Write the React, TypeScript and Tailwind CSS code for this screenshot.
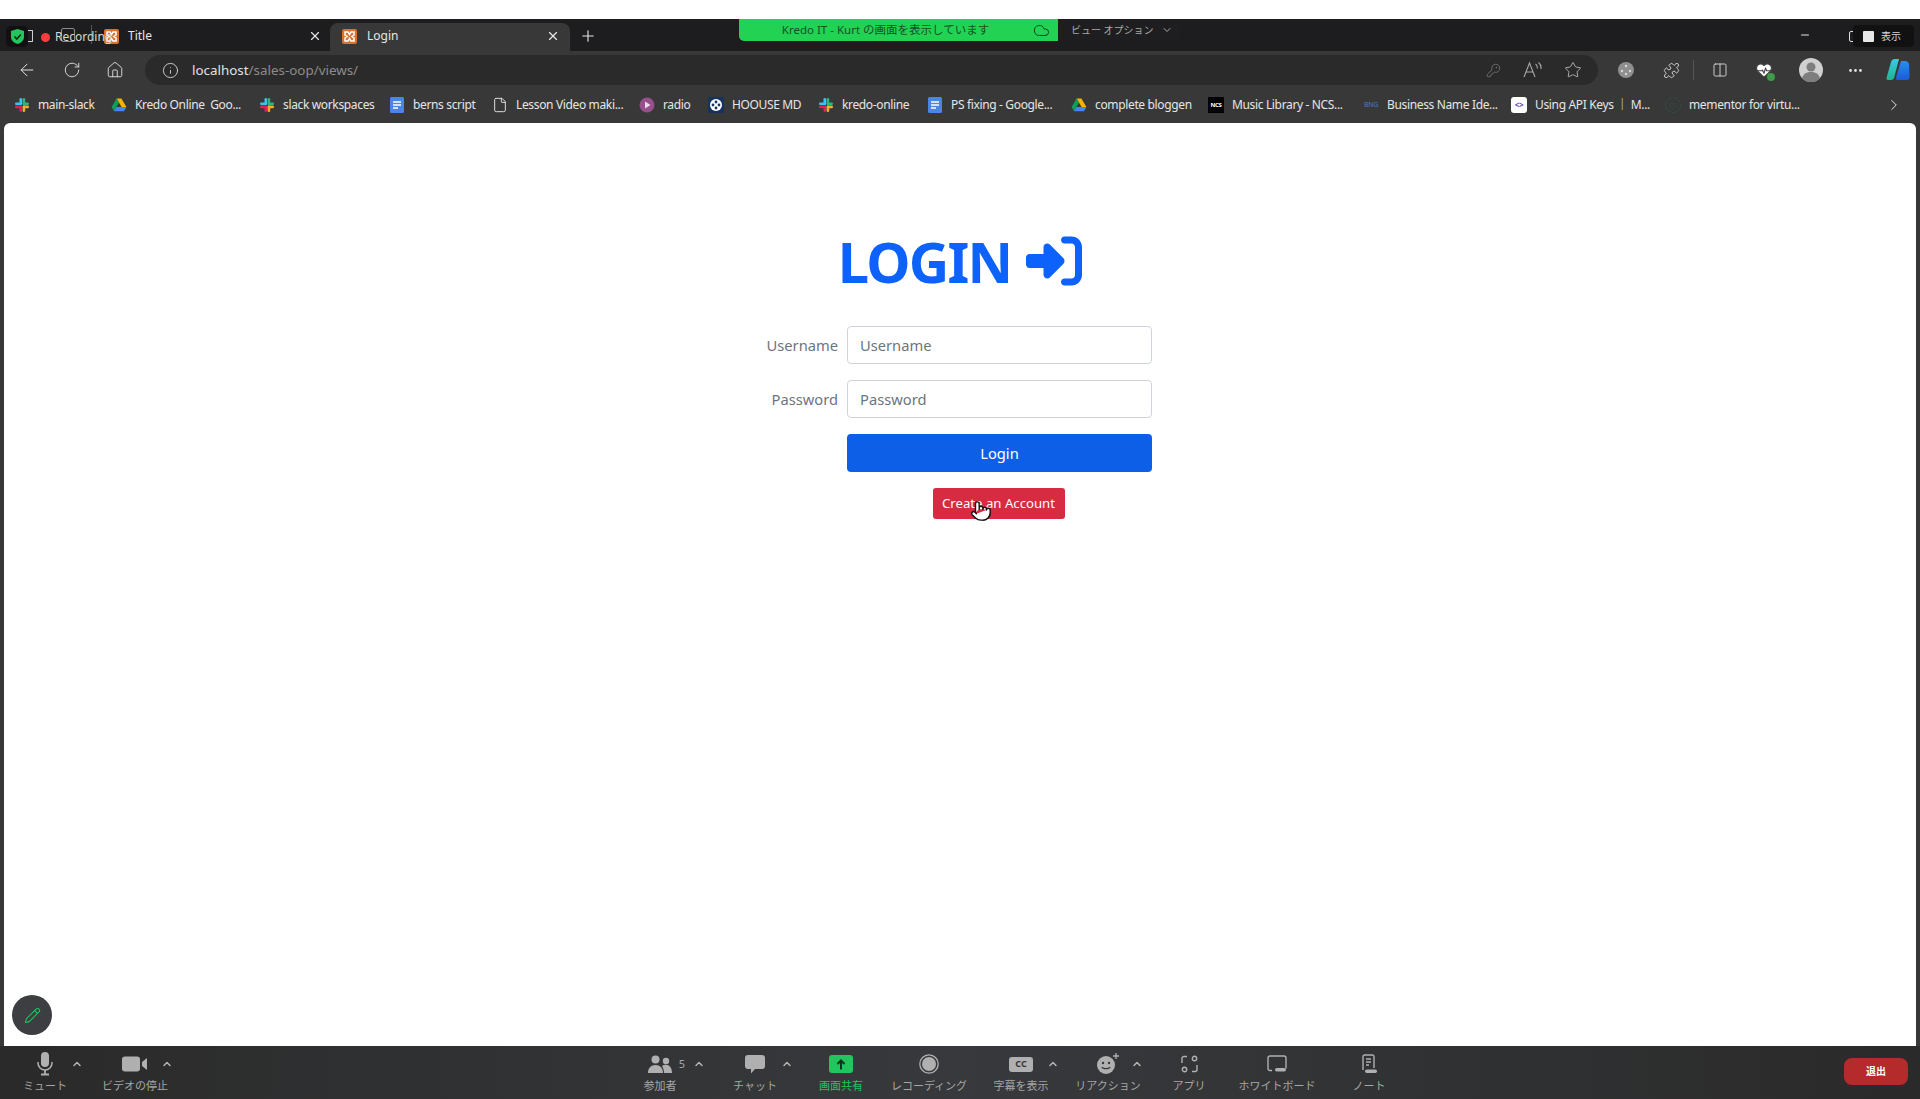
import React from "react";
import { FaRightToBracket } from "react-icons/fa6";
import {
  ArrowLeft,
  RotateCw,
  Home,
  Info,
  X,
  Plus,
  KeyRound,
  Star,
  Puzzle,
  Columns2,
  HeartPulse,
  MoreHorizontal,
  ChevronRight,
  ChevronDown,
  ChevronUp,
  Cloud,
  Minus,
  Pencil,
  File,
  Pointer,
} from "lucide-react";

const sans = "font-['Noto_Sans','Noto_Sans_CJK_JP',sans-serif]";

function SlackIcon() {
  return (
    <svg width="16" height="16" viewBox="0 0 16 16">
      <rect x="5.5" y="1" width="2.6" height="7" rx="1.3" fill="#36c5f0" />
      <rect x="1" y="5.5" width="7" height="2.6" rx="1.3" fill="#36c5f0" />
      <rect x="8.6" y="1" width="2.6" height="7" rx="1.3" fill="#2eb67d" />
      <rect x="8.6" y="5.5" width="6.4" height="2.6" rx="1.3" fill="#2eb67d" />
      <rect x="8.6" y="8.6" width="6.4" height="2.6" rx="1.3" fill="#ecb22e" />
      <rect x="8.6" y="8.6" width="2.6" height="6.4" rx="1.3" fill="#ecb22e" />
      <rect x="1" y="8.6" width="7" height="2.6" rx="1.3" fill="#e01e5a" />
      <rect x="5.5" y="8.6" width="2.6" height="6.4" rx="1.3" fill="#e01e5a" />
    </svg>
  );
}

function DriveIcon() {
  return (
    <svg width="16" height="16" viewBox="0 0 16 16">
      <path d="M5.6 1.5h4.8l5 8.5h-4.8z" fill="#f4b400" />
      <path d="M5.6 1.5 .6 10l2.4 4.2 5-8.6z" fill="#0f9d58" />
      <path d="M3 14.2h10l2.4-4.2H5.4z" fill="#4285f4" />
    </svg>
  );
}

function DocIcon() {
  return (
    <svg width="16" height="16" viewBox="0 0 16 16">
      <rect x="1" y="0" width="14" height="16" rx="1.5" fill="#4a86e8" />
      <path d="M4 5h8M4 8h8M4 11h5" stroke="#fff" strokeWidth="1.6" />
    </svg>
  );
}

function XamppIcon() {
  return (
    <svg width="15" height="15" viewBox="0 0 15 15">
      <rect width="15" height="15" rx="2" fill="#d9722c" />
      <path d="M3 3h3l1.500 2.500L9 3h3v3L9.800 7.500 12 9v3H9L7.500 9.500 6 12H3V9l2.200-1.500L3 6z" fill="none" stroke="#fff" strokeWidth="1.500" />
    </svg>
  );
}

function RadioIcon() {
  return (
    <svg width="16" height="16" viewBox="0 0 16 16">
      <circle cx="8" cy="8" r="7.500" fill="#96508c" />
      <path d="M6 4.500v7l5.500-3.500z" fill="#f0d8ee" />
    </svg>
  );
}

function ReelIcon() {
  return (
    <svg width="16" height="16" viewBox="0 0 16 16">
      <rect width="16" height="16" rx="1" fill="#16335e" />
      <circle cx="8" cy="8" r="6" fill="#fff" />
      <circle cx="8" cy="5" r="1.400" fill="#16335e" />
      <circle cx="8" cy="11" r="1.400" fill="#16335e" />
      <circle cx="5" cy="8" r="1.400" fill="#16335e" />
      <circle cx="11" cy="8" r="1.400" fill="#16335e" />
    </svg>
  );
}

const bookmarks: { label: string; width: string; icon: React.ReactNode }[] = [
  { label: "main-slack", width: "w-[97px]", icon: <SlackIcon /> },
  { label: "Kredo Online  Goo...", width: "w-[148px]", icon: <DriveIcon /> },
  { label: "slack workspaces", width: "w-[130px]", icon: <SlackIcon /> },
  { label: "berns script", width: "w-[103px]", icon: <DocIcon /> },
  { label: "Lesson Video maki...", width: "w-[147px]", icon: <File size={16} color="#e8e8e8" strokeWidth={1.4} /> },
  { label: "radio", width: "w-[69px]", icon: <RadioIcon /> },
  { label: "HOOUSE MD", width: "w-[110px]", icon: <ReelIcon /> },
  { label: "kredo-online", width: "w-[109px]", icon: <SlackIcon /> },
  { label: "PS fixing - Google...", width: "w-[144px]", icon: <DocIcon /> },
  { label: "complete bloggen", width: "w-[137px]", icon: <DriveIcon /> },
  {
    label: "Music Library - NCS...",
    width: "w-[155px]",
    icon: <span className="flex h-4 w-4 items-center justify-center bg-black text-[6px] font-bold text-white">NCS</span>,
  },
  {
    label: "Business Name Ide...",
    width: "w-[148px]",
    icon: <span className="flex h-4 w-4 items-center justify-center text-[7px] text-[#4a78c8]">BNG</span>,
  },
  {
    label: "Using API Keys ｜ M...",
    width: "w-[154px]",
    icon: (
      <span className="flex h-4 w-4 items-center justify-center rounded-[3px] bg-white text-[8px] font-bold text-[#5a3fc0]">
        &lt;&gt;
      </span>
    ),
  },
  {
    label: "mementor for virtu...",
    width: "w-[135px]",
    icon: <span className="flex h-4 w-4 items-center justify-center rounded-full border border-[#2f4a44] text-[8px] text-[#2f4a44]">m</span>,
  },
];

function Caret({ className }: { className: string }) {
  return (
    <div className={`flex h-[26px] w-2 shrink-0 items-center justify-center ${className}`}>
      <ChevronUp size={12} color="#b4b4b4" strokeWidth={3} className="shrink-0" />
    </div>
  );
}

function Tool({
  label,
  width,
  className = "",
  green = false,
  children,
}: {
  label: string;
  width: string;
  className?: string;
  green?: boolean;
  children: React.ReactNode;
}) {
  return (
    <div className={`flex shrink-0 flex-col items-center ${width} ${className}`}>
      <div className="flex h-[26px] items-center justify-center">{children}</div>
      <span className={`mt-[2px] whitespace-nowrap text-[11px] leading-[14px] ${green ? "text-[#22c55e]" : "text-[#a6a6a6]"}`}>
        {label}
      </span>
    </div>
  );
}

function ZoomToolbar() {
  return (
    <div className={`flex h-[53px] shrink-0 items-start bg-gradient-to-r from-[#2a2a2a] via-[#37393c] to-[#2a2a2a] pt-[5px] ${sans}`}>
      <Tool label="ミュート" width="w-[56px]" className="ml-[17px]">
        <svg width="18" height="24" viewBox="0 0 18 24" fill="#b0b0b0">
          <rect x="5" y="0" width="8" height="15" rx="4" />
          <path d="M2 10v1a7 7 0 0 0 14 0v-1" fill="none" stroke="#b0b0b0" strokeWidth="1.500" />
          <path d="M9 18v4M5 22.500h8" stroke="#b0b0b0" strokeWidth="1.800" />
        </svg>
      </Tool>
      <Caret className="" />
      <Tool label="ビデオの停止" width="w-[56px]" className="ml-[26px]">
        <svg width="26" height="16" viewBox="0 0 26 16" fill="#b0b0b0">
          <rect width="18" height="15" y="0.500" rx="3" />
          <path d="M20 6l5-4v12l-5-4z" />
        </svg>
      </Tool>
      <Caret className="" />

      <Tool label="参加者" width="w-[36px]" className="ml-[471px]">
        <svg width="24" height="19" viewBox="0 0 24 19" fill="#b0b0b0">
          <circle cx="7.500" cy="4.500" r="4" />
          <circle cx="18" cy="6" r="3.200" />
          <path d="M0 18c0-5 3-8 7.500-8s7.500 3 7.500 8zM16 18c0-3-.8-5-2-7 1-.7 2.500-1.200 4-1.200 3.500 0 6 3 6 8.200z" />
        </svg>
      </Tool>
      <span className="flex h-[26px] w-2 shrink-0 items-center justify-center text-[11px] text-[#a6a6a6]">5</span>
      <Caret className="ml-[9px]" />
      <Tool label="チャット" width="w-[40px]" className="ml-[32px]">
        <svg width="20" height="19" viewBox="0 0 20 19" fill="#b0b0b0">
          <path d="M3 0h14a3 3 0 0 1 3 3v8a3 3 0 0 1-3 3h-7l-4 4.500V14H3a3 3 0 0 1-3-3V3a3 3 0 0 1 3-3z" />
        </svg>
      </Tool>
      <Caret className="ml-[8px]" />
      <Tool label="画面共有" width="w-[40px]" className="ml-[30px]" green>
        <span className="flex h-[18px] w-6 items-center justify-center rounded-[3px] bg-[#22c55e] text-[#12351f]">
          <svg width="10" height="11" viewBox="0 0 10 11" fill="none" stroke="#12351f" strokeWidth="2">
            <path d="M5 10.500V2M1.500 5 5 1.500 8.500 5" />
          </svg>
        </span>
      </Tool>
      <Tool label="レコーディング" width="w-[40px]" className="ml-[48px]">
        <svg width="20" height="20" viewBox="0 0 20 20">
          <circle cx="10" cy="10" r="9.200" fill="none" stroke="#b0b0b0" strokeWidth="1.300" />
          <circle cx="10" cy="10" r="7" fill="#b0b0b0" />
        </svg>
      </Tool>
      <Tool label="字幕を表示" width="w-[40px]" className="ml-[52px]">
        <span className="flex h-[15px] w-6 items-center justify-center rounded-[3px] bg-[#b0b0b0] text-[9px] font-bold text-[#37393c]">
          CC
        </span>
      </Tool>
      <Caret className="ml-[8px]" />
      <Tool label="リアクション" width="w-[40px]" className="ml-[31px]">
        <svg width="24" height="22" viewBox="0 0 24 22">
          <circle cx="10" cy="12" r="9" fill="#b0b0b0" />
          <circle cx="7" cy="10" r="1.200" fill="#37393c" />
          <circle cx="13" cy="10" r="1.200" fill="#37393c" />
          <path d="M6 14c1 2.200 7 2.200 8 0" stroke="#37393c" strokeWidth="1.300" fill="none" />
          <path d="M20 0v6M17 3h6" stroke="#b0b0b0" strokeWidth="1.300" />
        </svg>
      </Tool>
      <Caret className="ml-[5px]" />
      <Tool label="アプリ" width="w-[40px]" className="ml-[28px]">
        <svg width="17" height="18" viewBox="0 0 17 18" fill="none" stroke="#b0b0b0" strokeWidth="1.400">
          <path d="M6 1.500H3A2 2 0 0 0 1 3.500V8M11 16.500h3a2 2 0 0 0 2-2V10" />
          <circle cx="13.500" cy="3.500" r="2.200" />
          <circle cx="3.500" cy="14.500" r="2.200" />
        </svg>
      </Tool>
      <Tool label="ホワイトボード" width="w-[40px]" className="ml-[48px]">
        <svg width="20" height="18" viewBox="0 0 20 18" fill="none" stroke="#b0b0b0" strokeWidth="1.400">
          <path d="M5 15.500H3a2 2 0 0 1-2-2V3a2 2 0 0 1 2-2h14a2 2 0 0 1 2 2v10.500" />
          <rect x="8" y="13" width="11" height="3.500" rx="1.700" fill="#b0b0b0" stroke="none" />
        </svg>
      </Tool>
      <Tool label="ノート" width="w-[40px]" className="ml-[52px]">
        <svg width="18" height="20" viewBox="0 0 18 20" fill="none" stroke="#b0b0b0" strokeWidth="1.400">
          <path d="M3 16V2.500A1.500 1.500 0 0 1 4.500 1h8A1.500 1.500 0 0 1 14 2.500V14M6 5h5M6 8h5M6 11h3" />
          <rect x="5" y="15.500" width="12" height="3.500" rx="1.700" fill="#b0b0b0" stroke="none" />
        </svg>
      </Tool>

      <button className="mt-[7px] ml-auto mr-[12px] flex h-[27px] w-16 items-center justify-center rounded-[8px] bg-[#b52a2a] text-[10px] font-bold text-white">
        退出
      </button>
    </div>
  );
}

function LoginForm() {
  return (
    <div className="flex flex-col items-center pt-[106px] font-['Noto_Sans',sans-serif]">
      <h1 className="mb-[33px] flex h-16 items-center text-[56px] font-bold leading-none tracking-[-1.8px] text-[#0d62fb]">
        LOGIN
        <FaRightToBracket size={56} className="ml-[15px]" />
      </h1>
      <form className="grid w-[400px] grid-cols-[78px_1fr] items-center gap-x-[9px] gap-y-4 pr-2 text-[14.7px] text-[#6c757d]">
        <label className="pt-[1px] text-right">Username</label>
        <input
          placeholder="Username"
          className="h-[38px] rounded-[4px] border border-[#ced4da] px-3 placeholder:text-[#6c757d]"
        />
        <label className="pt-[1px] text-right">Password</label>
        <input
          placeholder="Password"
          className="h-[38px] rounded-[4px] border border-[#ced4da] px-3 placeholder:text-[#6c757d]"
        />
        <button type="button" className="col-start-2 h-[38px] rounded-[4px] bg-[#0d5fe8] pt-[1px] text-white">
          Login
        </button>
        <div className="col-start-2 flex justify-center pr-[2px]">
          <a className="relative flex h-[31px] w-[132px] items-center justify-center rounded-[3px] bg-[#d62b40] pt-[1px] text-[13.2px] whitespace-nowrap text-white">
            Create an Account
            <Pointer size={22} fill="#fff" color="#111" strokeWidth={1.500} className="absolute top-[12px] left-[37px]" />
          </a>
        </div>
      </form>
    </div>
  );
}

export default function App() {
  return (
    <div className={`relative flex h-[1099px] w-[1920px] flex-col overflow-hidden bg-white ${sans}`}>
      <div className="h-[19px] shrink-0 bg-white" />

      {/* tab strip */}
      <div className="flex h-8 shrink-0 items-end bg-[#1d1d1f] text-[12px] text-[#e6e6e6]">
        <div className="ml-[104px] flex h-[28px] w-[226px] items-center pb-[2px]">
          <XamppIcon />
          <span className="ml-[9px]">Title</span>
          <X size={14} className="ml-auto mr-[8px]" />
        </div>
        <div className="flex h-[28px] w-[240px] items-center rounded-t-[8px] bg-[#383838] pl-[12px] pb-[2px]">
          <XamppIcon />
          <span className="ml-[10px]">Login</span>
          <X size={14} className="ml-auto mr-[10px]" />
        </div>
        <Plus size={18} className="mb-[6px] ml-[9px]" strokeWidth={1.500} />
        <Minus size={12} className="mb-[10px] ml-auto" />
        <div className="mb-[9px] ml-[38px] mr-[63px] h-[11px] w-[8px] rounded-[2px] border border-[#ddd]" />
      </div>

      {/* toolbar */}
      <div className="flex h-[38px] shrink-0 items-start bg-[#383838] pt-[4px] text-[#e2e2e2]">
        <div className="flex h-[30px] items-center">
          <ArrowLeft size={20} strokeWidth={1.200} className="ml-[17px]" />
          <RotateCw size={18} strokeWidth={1.200} className="ml-[26px]" />
          <Home size={18} strokeWidth={1.200} className="ml-[25px]" />
          <div className="ml-[21px] flex h-[30px] w-[1453px] items-center rounded-full bg-[#2a2a2a]">
            <Info size={17} strokeWidth={1.200} className="ml-[17px]" />
            <span className="ml-[13px] text-[13.4px]">
              localhost<span className="text-[#8c8c8c]">/sales-oop/views/</span>
            </span>
            <KeyRound size={15} strokeWidth={1.200} className="ml-auto text-[#7c7c7c]" />
            <svg width="20" height="18" viewBox="0 0 20 18" fill="none" stroke="#a8a8a8" strokeWidth="1.100" className="ml-[22px]">
              <path d="M1 16 6.500 2 12 16M3 11h7M12.500 3c1.500 1 2 2.500 1.800 4.500M15.500 1.500c2 1.500 2.800 3.500 2.500 6.500" />
            </svg>
            <Star size={18} strokeWidth={1.200} className="ml-[21px] mr-[16px] text-[#b8b8b8]" />
          </div>
          <svg width="16" height="16" viewBox="0 0 16 16" className="ml-[20px]">
            <circle cx="8" cy="8" r="8" fill="#8f8f8f" />
            <circle cx="8" cy="4" r="1.200" fill="#d8d8d8" />
            <circle cx="4" cy="9" r="1.200" fill="#d8d8d8" />
            <circle cx="12" cy="9" r="1.200" fill="#d8d8d8" />
            <circle cx="8" cy="12" r="1.200" fill="#d8d8d8" />
          </svg>
          <Puzzle size={17} strokeWidth={1.200} className="ml-[29px]" />
          <div className="ml-[13px] h-5 w-px bg-[#555]" />
          <Columns2 size={16} strokeWidth={1.300} className="ml-[18px]" />
          <div className="relative ml-[27px]">
            <HeartPulse size={18} strokeWidth={1.500} fill="#fff" color="#444" />
            <span className="absolute -right-[2px] -bottom-[2px] h-[8px] w-[8px] rounded-full bg-[#3f9a4a]" />
          </div>
          <svg width="24" height="24" viewBox="0 0 24 24" className="ml-[26px]">
            <circle cx="12" cy="12" r="12" fill="#d0d0d0" />
            <circle cx="12" cy="9" r="4.500" fill="#7e7e7e" />
            <path d="M3 20c1.500-4.500 5-6 9-6s7.500 1.500 9 6a12 12 0 0 1-18 0z" fill="#7e7e7e" />
          </svg>
          <MoreHorizontal size={17} className="ml-[24px]" />
          <svg width="24" height="24" viewBox="0 0 24 24" className="ml-[22px]">
            <defs>
              <linearGradient id="copilotA" x1="0" y1="0" x2="0" y2="1">
                <stop offset="0" stopColor="#39c8e8" />
                <stop offset="1" stopColor="#1fb58f" />
              </linearGradient>
              <linearGradient id="copilotB" x1="0" y1="0" x2="0" y2="1">
                <stop offset="0" stopColor="#2b8cf0" />
                <stop offset="1" stopColor="#1a5bd8" />
              </linearGradient>
            </defs>
            <path d="M9 1h4l-5 19q-.5 2-3 2H2q-2 0-1.500-2L5 4q.8-3 4-3z" fill="url(#copilotA)" />
            <path d="M15 3h4q3 0 4 3l.500 13q0 3-3 3h-9q-2 0-1.500-2z" fill="url(#copilotB)" />
          </svg>
        </div>
      </div>

      {/* bookmarks */}
      <div className="flex h-[34px] shrink-0 items-center bg-[#383838] pb-[2px] pl-[14px] text-[12px] tracking-[-0.35px] text-[#e6e6e6]">
        {bookmarks.map((b) => (
          <div key={b.label + b.width} className={`flex shrink-0 items-center gap-[8px] whitespace-pre ${b.width}`}>
            <span className="flex w-4 shrink-0 justify-center">{b.icon}</span>
            {b.label}
          </div>
        ))}
        <ChevronRight size={18} strokeWidth={1.300} className="ml-auto mr-[17px]" />
      </div>

      {/* page */}
      <div className="flex min-h-0 flex-1 bg-[#383838]">
        <div className="relative mx-[4px] flex-1 rounded-t-[6px] bg-white">
          <LoginForm />
          <div className="absolute bottom-[11px] left-[8px] flex h-10 w-10 items-center justify-center rounded-full bg-[#3c3e41]">
            <Pencil size={17} color="#22c55e" strokeWidth={1.500} />
          </div>
        </div>
      </div>

      <ZoomToolbar />

      {/* zoom overlays */}
      <div className="absolute top-[26px] left-[6px] flex h-[21px] w-[22px] items-center justify-center rounded-[5px] bg-[#111]">
        <svg width="13" height="15" viewBox="0 0 13 15">
          <path d="M6.500 0 13 2v6c0 3.500-3 6-6.500 7C3 14 0 11.500 0 8V2z" fill="#22c55e" />
          <path d="M3.500 7.500 5.800 10l4-4.500" stroke="#0a2a14" strokeWidth="1.600" fill="none" />
        </svg>
      </div>
      <div className="absolute top-[30px] left-[28px] h-[12px] w-[5px] rounded-r-[1px] border border-l-0 border-[#cfcfcf]" />
      <div className="absolute top-[28px] left-[61px] h-[14px] w-[14px] rounded-[2px] border border-[#8a8a8a]" />
      <div className="absolute top-[25px] left-[91px] h-[19px] w-px bg-[#555]" />
      <div className="absolute top-[29px] left-[41px] flex items-center gap-[5px] text-[12px] leading-[16px] text-[#d8d8d8]">
        <span className="h-[9px] w-[9px] rounded-full bg-[#ff3b3b]" />
        Recording
      </div>
      <div className="absolute top-[19px] left-[739px] flex h-[22px] w-[442px] overflow-hidden rounded-b-[5px] text-[10px]">
        <div className="flex w-[319px] items-center bg-[#22d353] text-[11.5px] text-[#14502a]">
          <span className="ml-[42px] w-[209px] text-center whitespace-nowrap">Kredo IT - Kurt の画面を表示しています</span>
          <Cloud size={17} strokeWidth={1.300} className="ml-[43px] text-[#0f3d1f]" />
        </div>
        <div className="flex flex-1 items-center bg-[#1e1e20] pl-[13px] text-[#a8a8a8]">
          ビュー オプション
          <ChevronDown size={12} className="ml-[7px]" />
        </div>
      </div>
      <div className="absolute top-[25px] left-[1853px] flex h-[22px] w-[61px] items-center rounded-[4px] bg-[#111] pl-[10px] text-[10px] text-[#d8d8d8]">
        <span className="mr-[7px] h-[11px] w-[11px] rounded-[1px] bg-[#e8e8e8]" />
        表示
      </div>
    </div>
  );
}
